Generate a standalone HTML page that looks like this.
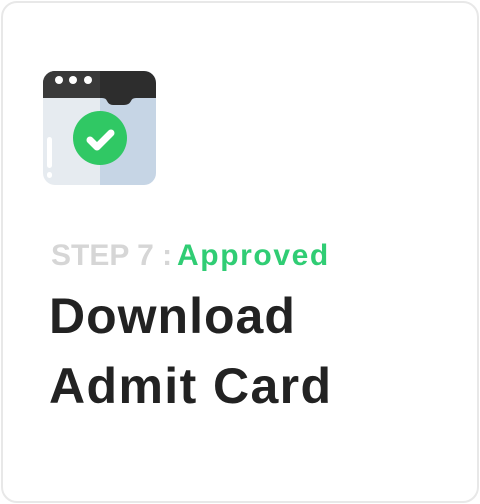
<!DOCTYPE html>
<html><head><style>
body{margin:0;width:480px;height:504px;background:#fff;position:relative;font-family:"Liberation Sans",sans-serif;overflow:hidden}
.card{position:absolute;left:1px;top:1px;width:474px;height:498px;border:2px solid #e8e8e8;border-radius:16px}
.t{position:absolute;white-space:nowrap}
</style></head><body>
<div class="card"></div>
<svg style="position:absolute;left:0;top:0" width="480" height="220">
<defs><clipPath id="c"><rect x="43" y="71" width="113" height="114" rx="12"/></clipPath></defs>
<g clip-path="url(#c)">
<rect x="43" y="71" width="57" height="114" fill="#e6ebf0"/>
<rect x="100" y="71" width="56" height="114" fill="#c6d5e5"/>
<path d="M43 71H156V98H136Q132 98 131 101Q129 105 124 105H113Q109 105 107 101Q106 98 102 98H43Z" fill="#2d2d2d"/>
<rect x="43" y="71" width="57" height="27" fill="#3a3a3a"/>
</g>
<circle cx="59" cy="80" r="4" fill="#fff"/><circle cx="73" cy="80" r="4" fill="#fff"/><circle cx="88" cy="80" r="4" fill="#fff"/>
<rect x="47" y="137" width="5" height="31" rx="2.5" fill="#fff"/>
<rect x="47" y="172" width="5" height="6" rx="2.5" fill="#fff"/>
<circle cx="100" cy="138" r="27" fill="#30c864"/>
<path d="M90 140L97 147L111 133" stroke="#fff" stroke-width="7" fill="none" stroke-linecap="round" stroke-linejoin="round"/>
</svg>
<div class="t" style="left:51px;top:239px;font-size:30px;font-weight:bold;color:#d6d6d6">STEP 7 :</div>
<div class="t" style="left:177px;top:239px;font-size:30px;font-weight:bold;color:#30cd74;letter-spacing:1.6px">Approved</div>
<div class="t" style="left:49px;top:287px;font-size:50px;font-weight:bold;color:#222;line-height:58px;letter-spacing:1px">Download</div>
<div class="t" style="left:49px;top:357px;font-size:50px;font-weight:bold;color:#222;line-height:58px;letter-spacing:1.4px">Admit Card</div>
</body></html>
